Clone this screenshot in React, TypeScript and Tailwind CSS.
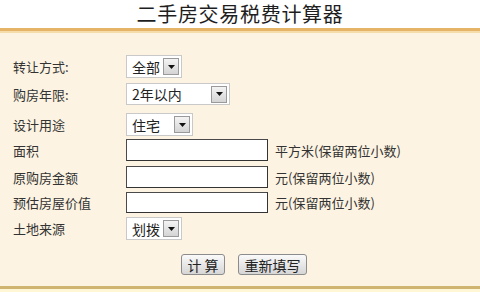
import React from "react";

const font = { fontFamily: '"Noto Sans CJK SC", "Noto Sans", sans-serif' };

function Select({ text, w }: { text: string; w: string }) {
  return (
    <div className={`${w} h-full flex items-center justify-between bg-white border border-[#c9c9c9] pl-[5px] pr-[2px]`}>
      <span className="text-[14px] leading-none text-[#222]">{text}</span>
      <span className="w-[16px] h-[17px] flex items-center justify-center border border-[#9a9a9a] bg-gradient-to-b from-[#f4f4f4] to-[#d4d4d4]">
        <svg width="7" height="4" viewBox="0 0 7 4"><path d="M0 0H7L3.5 4Z" fill="#111" /></svg>
      </span>
    </div>
  );
}

function Input() {
  return <div className="w-[142px] h-full bg-white border border-[#4a4a4a] border-r-[#333] border-b-[#333]" />;
}

function Row({ label, h, mt, children }: { label: string; h: string; mt: string; children: React.ReactNode }) {
  return (
    <div className={`flex items-center ${h} ${mt}`}>
      <div className="w-[126px] shrink-0 pl-[13px] text-[13px] text-[#333] leading-none">{label}</div>
      {children}
    </div>
  );
}

export default function App() {
  return (
    <div className="w-[480px] h-[300px] bg-white flex flex-col overflow-hidden" style={font}>
      <div className="h-[28px] flex items-center justify-center">
        <span className="text-[20px] tracking-[0.7px] text-[#1e1e1e] font-normal leading-[28px]">二手房交易税费计算器</span>
      </div>
      <div className="h-[3px] bg-[#e6b467]" />
      <div className="h-[2px] bg-[#f6dcaa]" />
      <div className="h-[253px] bg-[#fdf3e2] flex flex-col">
        <Row label="转让方式:" h="h-[23px]" mt="mt-[22px]"><Select text="全部" w="w-[56px]" /></Row>
        <Row label="购房年限:" h="h-[22px]" mt="mt-[5px]"><Select text="2年以内" w="w-[104px]" /></Row>
        <Row label="设计用途" h="h-[23px]" mt="mt-[8px]"><Select text="住宅" w="w-[67px]" /></Row>
        <Row label="面积" h="h-[22px]" mt="mt-[3px]">
          <Input />
          <span className="ml-[7px] text-[13px] text-[#333] leading-none">平方米(保留两位小数)</span>
        </Row>
        <Row label="原购房金额" h="h-[22px]" mt="mt-[5px]">
          <Input />
          <span className="ml-[7px] text-[13px] text-[#333] leading-none">元(保留两位小数)</span>
        </Row>
        <Row label="预估房屋价值" h="h-[21px]" mt="mt-[4px]">
          <Input />
          <span className="ml-[7px] text-[13px] text-[#333] leading-none">元(保留两位小数)</span>
        </Row>
        <Row label="土地来源" h="h-[23px]" mt="mt-[4px]"><Select text="划拨" w="w-[56px]" /></Row>
        <div className="flex justify-center gap-[13px] pl-[8px] mt-[14px] h-[21px]">
          <button className="w-[44px] h-full rounded-[3px] border border-[#8c8c8c] bg-gradient-to-b from-[#fafafa] to-[#d6d6d6] text-[14px] leading-none text-[#222]">计 算</button>
          <button className="w-[69px] h-full rounded-[3px] border border-[#8c8c8c] bg-gradient-to-b from-[#fafafa] to-[#d6d6d6] text-[14px] leading-none text-[#222]">重新填写</button>
        </div>
      </div>
      <div className="h-[3px] bg-[#cfb370]" />
      <div className="h-[3px] bg-[#fff6d6]" />
      <div className="flex-1 bg-white" />
    </div>
  );
}
